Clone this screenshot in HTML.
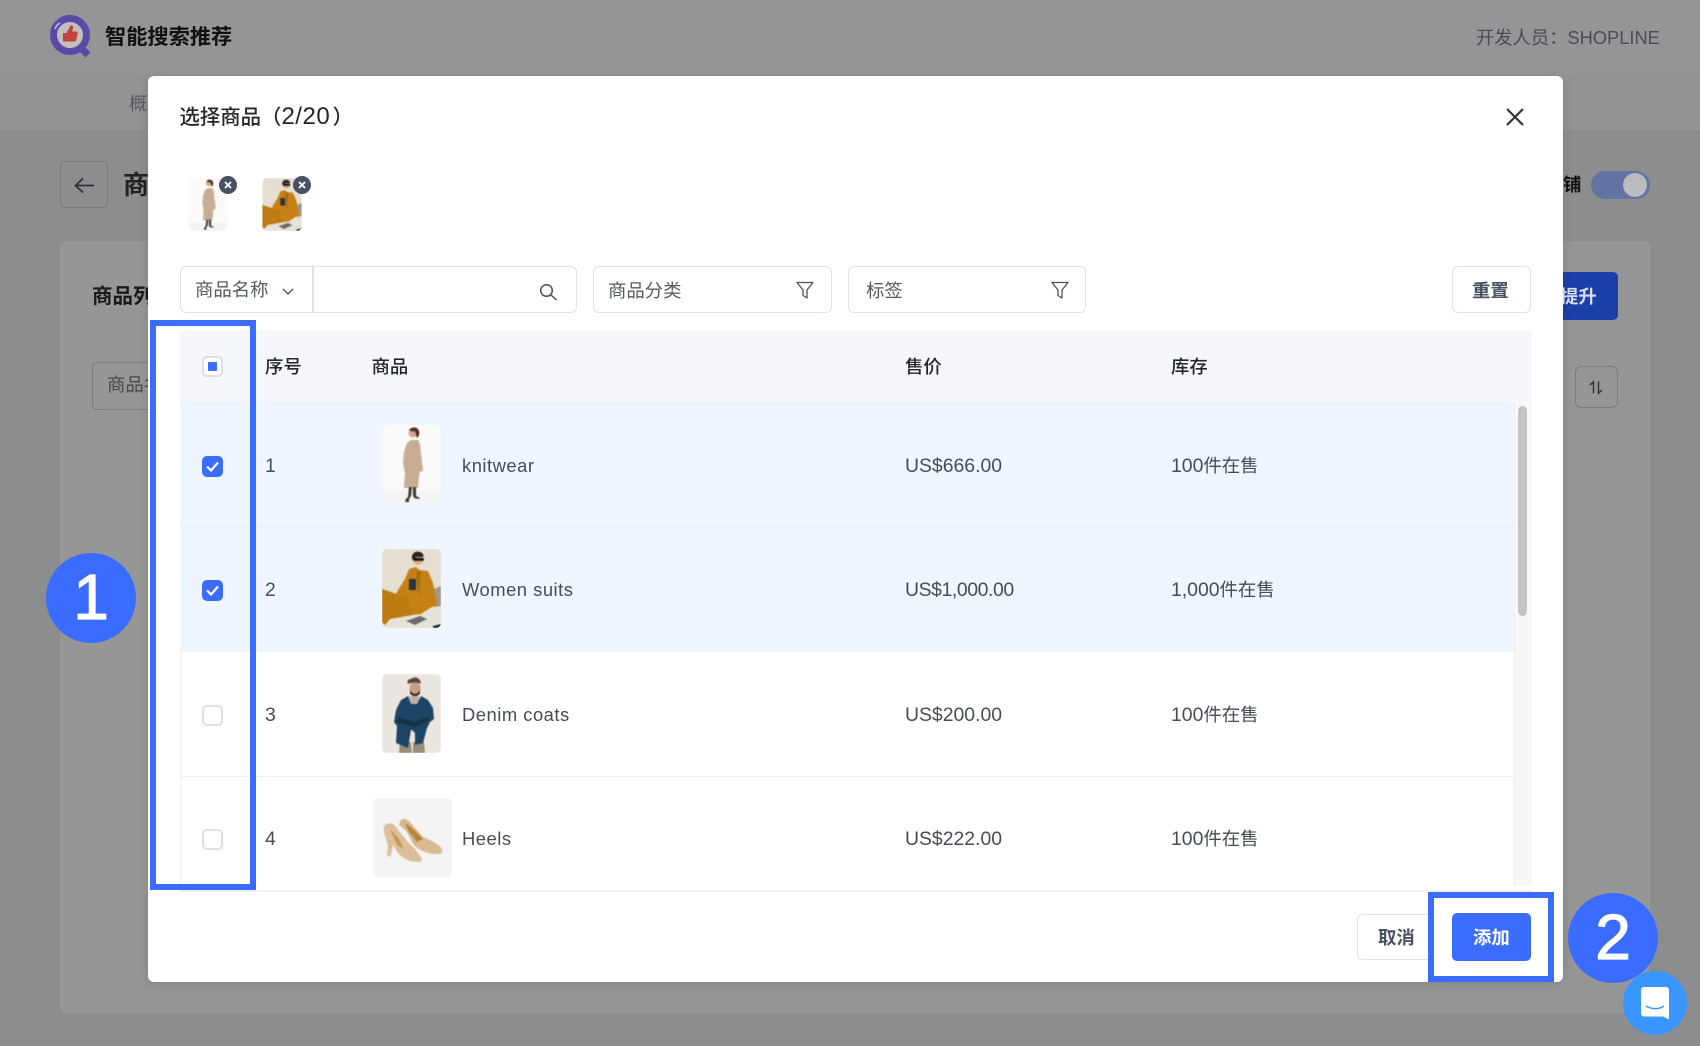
<!DOCTYPE html>
<html lang="zh-CN"><head><meta charset="utf-8"><title>智能搜索推荐</title>
<style>
*{box-sizing:border-box;margin:0;padding:0}
html,body{width:1700px;height:1046px;overflow:hidden}
body{position:relative;background:#8c8d8f;font-family:"Liberation Sans","Noto Sans CJK SC",sans-serif;color:#474c59}
.a{position:absolute}
.t{position:absolute;white-space:nowrap;line-height:24px;height:24px;font-size:18.4px}
.b{font-weight:700}
.m{font-weight:500;color:#23262d}
.box{position:absolute;border:1.5px solid #dfe2e9;border-radius:6px;background:#fff}
.cb{position:absolute;left:202px;width:21px;height:21px;border:2px solid #dcdfe9;border-radius:5px;background:#fff}
.cb.on{background:#3a6cff;border-color:#3a6cff}
.r{position:absolute;left:180px;width:1334px}
.name{font-size:18.4px;letter-spacing:.5px}
.n{font-size:19.4px}
.n i{font-style:normal;font-size:18.4px}
svg{position:absolute;overflow:visible}
.img{border-radius:5px;overflow:hidden;position:absolute}
.img svg{position:static;display:block;width:100%;height:100%;filter:blur(.45px)}
.blue{position:absolute;border:6px solid #3a6cff}
.badge{position:absolute;width:90px;height:90px;border-radius:50%;background:#3a6cff;color:#fff;text-align:center;font-size:64px;line-height:88px;-webkit-text-stroke:1.2px #fff}
</style></head><body>
<svg width="0" height="0" style="position:absolute"><defs>
<symbol id="w1" viewBox="0 0 59 79"><rect width="59" height="79" fill="#fafaf9"/><rect y="66" width="59" height="13" fill="#f4f4f3"/>
<path d="M25 18l4-3 7 0 2 4 1 10 2 15-1 3-2-1-1 5-1 12-14 0 1-15-1-5-1-5 1-11z" fill="#c6ad94"/>
<path d="M27 62h3l-1 9-2 3 0 3-4 0 1-3 2-2zM31 62h3l0 9 4 2-1 1-5-1-1-3z" fill="#3f372e"/>
<circle cx="31" cy="8" r="4.500" fill="#d2ab90"/><path d="M27 5c3-4 9-3 10 1 1 4-1 6-2 7-1-3-1-6-3-7-1 1-3 0-5-1z" fill="#4a3026"/></symbol>
<symbol id="w2" viewBox="0 0 59 79"><rect width="59" height="79" fill="#e5dfd2"/><path d="M0 68l30-10 29 0v21H0z" fill="#e6e2da"/><path d="M52 40l7-3v20l-7 1z" fill="#a39787"/>
<path d="M0 40l12 4 20 6-1 16-23 4-5 6-3-3z" fill="#bd7c12"/>
<path d="M27 20l7-2 3 3 9 1 5 12 4 22-7 3-9 6-8 1-3-10-2-8-13-1 3-6 7-11z" fill="#c58115"/>
<path d="M27 30h7v11h-7z" fill="#2d3140"/><path d="M34 27l2-7 3 3-2 26z" fill="#a96d0f"/>
<circle cx="36" cy="10" r="5.500" fill="#d6a784"/><path d="M30 10c-1-7 5-8 8-7 3 1 4 3 3 5l-7 0-2 4z" fill="#2a2523"/><rect x="32" y="9" width="10" height="2.800" rx="1.300" fill="#15120f"/>
<path d="M24 72l14-5 7 3-12 6z" fill="#6e6a6a"/><path d="M51 77l8-2v4h-8z" fill="#2a2a2a"/></symbol>
<symbol id="m1" viewBox="0 0 59 79"><rect width="59" height="79" fill="#ece6e1"/>
<path d="M18 68h11l1 11H17zM31 68h11l1 11H31z" fill="#9a8c7a"/><path d="M27 22h10v24H27z" fill="#bdb2a5"/>
<path d="M26 22l-7 4-5 10-2 12 3 4-1 17 12 5 3-18 1 0 3 3 0 12 8-2 4-15 3-6 4-3-1-11-5-8-7-4-4 8-6 0z" fill="#1d4563"/>
<path d="M15 43l17 5 14-5 2 3-15 7-18-5z" fill="#143249"/>
<ellipse cx="33" cy="15" rx="5.500" ry="7" fill="#c69d80"/><path d="M26 10c-2-5 3-5 5-6 3-2 8 1 8 6-3-2-9-2-13 0z" fill="#5c4a38"/><path d="M28 16c2 5 8 5 10 0v3c-1 4-9 4-10 0z" fill="#3d2d22"/></symbol>
<symbol id="h1" viewBox="0 0 79 79"><rect width="79" height="79" fill="#f4f4f4"/>
<path d="M11 28c3-4 9-3 11 0l12 15c2 3 5 5 8 8l6 8c2 4 0 5-3 5-8 0-15-3-20-9l-5-8-1 6-2 6-3-2 1-10c-2-6-5-13-4-19z" fill="#dcbf9a"/>
<path d="M27 23c3-4 7-2 9 0l14 16c8 3 17 8 19 12 1 4-1 6-6 5-9 0-18-4-23-10l-6-12-8-7z" fill="#d9ba93"/>
<path d="M32 25l6 4 12 12-6 3-8-10z" fill="#b9833e"/><path d="M17 31l9 10 5 10-7-4z" fill="#c79654"/></symbol>
</defs></svg>

<!-- background -->
<div class="a" style="left:0;top:0;width:1700px;height:76px;background:#949597"></div>
<div class="a" style="left:0;top:76px;width:1700px;height:54px;background:#929395"></div>
<div class="a" style="left:60px;top:241px;width:1590px;height:772px;background:#969696;border-radius:6px"></div>

<svg style="left:48px;top:14px" width="46" height="46" viewBox="0 0 46 46">
<path d="M32 33l8 8" stroke="#5a49a5" stroke-width="7"/>
<circle cx="22" cy="21" r="16.500" fill="#c3bdbb" stroke="#5a49a5" stroke-width="7"/>
<path d="M15 19h3.500l4-7.500c2-1 3 1 2.500 3l-1 3h5c1 1 1 2 .5 3l-1.500 6c-.5 1-1 1-2 1H15z" fill="#c0443c"/>
<path d="M7 15c1-3 3-5 5-6" stroke="#c9c3e6" stroke-width="1.500" fill="none"/></svg>
<div class="t b" style="left:105px;top:26px;font-size:21.200px;color:#111">智能搜索推荐</div>
<div class="t" style="left:1476px;top:26px;font-size:18.300px;color:#4a4c52">开发人员：SHOPLINE</div>
<div class="t" style="left:129px;top:92px;color:#58595c">概</div>
<div class="a" style="left:60px;top:161px;width:48px;height:47px;border:1.500px solid #76777a;border-radius:5px"></div>
<svg style="left:74px;top:177px" width="21" height="17" viewBox="0 0 21 17" fill="none" stroke="#2f3136" stroke-width="1.800"><path d="M20 8.500H2M9 1.500l-7.500 7 7.500 7"/></svg>
<div class="t b" style="left:123px;top:173px;font-size:26px;color:#222">商</div>
<div class="t b" style="left:92px;top:285px;font-size:20.500px;color:#1a1a1b">商品列</div>
<div class="a" style="left:92px;top:362px;width:70px;height:48px;border:1.500px solid #7b7c7e;border-radius:5px"></div>
<div class="t" style="left:107px;top:373px;color:#47484c">商品名</div>
<div class="t b" style="left:1563px;top:173px;color:#111">铺</div>
<div class="a" style="left:1591px;top:171px;width:59px;height:28px;border-radius:14px;background:#6373a3"></div>
<div class="a" style="left:1623px;top:173px;width:24px;height:24px;border-radius:50%;background:#bbbcbf"></div>
<div class="a" style="left:1500px;top:272px;width:118px;height:48px;border-radius:5px;background:#1d3fa8"></div>
<div class="t b" style="left:1560px;top:285px;color:#d8dde9">提升</div>
<div class="a" style="left:1575px;top:366px;width:43px;height:42px;border:1.500px solid #7b7c7e;border-radius:6px"></div>
<svg style="left:1589px;top:381px" width="14" height="13" viewBox="0 0 14 13" fill="none" stroke="#2f3136" stroke-width="1.400"><path d="M4.500 12.500V.8L1 4M9.500 .5v11.700L13 9"/></svg>

<!-- modal -->
<div class="a" style="left:148px;top:76px;width:1415px;height:906px;background:#fff;border-radius:6px;box-shadow:0 2px 10px rgba(0,0,0,.12)"></div>
<div class="t m" style="left:179.500px;top:104.500px;font-size:20.400px">选择商品（<span style="font-size:24px;letter-spacing:.5px;margin-right:2.500px">2/20</span>）</div>
<svg style="left:1506px;top:108px" width="18" height="18" viewBox="0 0 18 18" stroke="#2f3440" stroke-width="2.200"><path d="M1 1l16 16M17 1L1 17"/></svg>

<div class="img" style="left:188px;top:178px;width:40px;height:53px"><svg viewBox="0 0 59 79"><use href="#w1"/></svg></div>
<div class="img" style="left:262px;top:178px;width:40px;height:53px"><svg viewBox="0 0 59 79"><use href="#w2"/></svg></div>
<svg style="left:219px;top:176px" width="18" height="18" viewBox="0 0 18 18"><circle cx="9" cy="9" r="9" fill="#495164"/><path d="M6 6l6 6M12 6l-6 6" stroke="#fff" stroke-width="1.800"/></svg>
<svg style="left:293px;top:176px" width="18" height="18" viewBox="0 0 18 18"><circle cx="9" cy="9" r="9" fill="#495164"/><path d="M6 6l6 6M12 6l-6 6" stroke="#fff" stroke-width="1.800"/></svg>

<!-- filters -->
<div class="box" style="left:180px;top:266px;width:397px;height:47px"></div>
<div class="a" style="left:312px;top:267px;width:1.500px;height:45px;background:#dfe2e9"></div>
<div class="t" style="left:195px;top:278px;color:#565b68">商品名称</div>
<svg style="left:282px;top:288px" width="12" height="7" viewBox="0 0 12 7" fill="none" stroke="#4a5160" stroke-width="1.300"><path d="M1 1l5 5 5-5"/></svg>
<svg style="left:539px;top:283px" width="19" height="18" viewBox="0 0 19 18" fill="none" stroke="#4a5160" stroke-width="1.500"><circle cx="7.500" cy="7.500" r="5.800"/><path d="M12 12l5.500 5"/></svg>
<div class="box" style="left:593px;top:266px;width:239px;height:47px"></div>
<div class="t" style="left:608px;top:279px;color:#565b68">商品分类</div>
<svg style="left:796px;top:281px" width="18" height="18" viewBox="0 0 18 18" fill="none" stroke="#4a5160" stroke-width="1.300" stroke-linejoin="round"><path d="M1 1.500h16l-6 7.500v8l-4-2.500V9z"/></svg>
<div class="box" style="left:848px;top:266px;width:238px;height:47px"></div>
<div class="t" style="left:866px;top:279px;color:#565b68">标签</div>
<svg style="left:1051px;top:281px" width="18" height="18" viewBox="0 0 18 18" fill="none" stroke="#4a5160" stroke-width="1.300" stroke-linejoin="round"><path d="M1 1.500h16l-6 7.500v8l-4-2.500V9z"/></svg>
<div class="box" style="left:1451.500px;top:266px;width:79.500px;height:47px"></div>
<div class="t b" style="left:1472px;top:278.500px;color:#4a5160">重置</div>

<!-- table -->
<div class="a" style="left:180px;top:330px;width:1351px;height:72px;background:#f5f7fb;border-radius:6px 6px 0 0"></div>
<div class="a" style="left:180px;top:402px;width:1px;height:489px;background:#f0f1f4"></div>
<div class="a" style="left:1530px;top:330px;width:1px;height:556px;background:#f0f1f4"></div>
<div class="r" style="top:402px;height:125px;background:#eff6ff"></div>
<div class="r" style="top:527px;height:125px;background:#eff6ff;border-top:1px solid #e9eff7"></div>
<div class="r" style="top:776px;height:1px;background:#eef0f4"></div>
<div class="a" style="left:1514px;top:402px;width:16px;height:484px;background:#f8f8f8;border-left:1px solid #eeeeee"></div>
<div class="a" style="left:1518px;top:406px;width:9px;height:210px;border-radius:5px;background:#c4c4c4"></div>
<div class="a" style="left:180px;top:890px;width:1351px;height:1.500px;background:#eef0f4"></div>

<div class="cb" style="top:356px"></div><div class="a" style="left:208px;top:362px;width:9px;height:9px;border-radius:1px;background:#3a6cff"></div>
<div class="t m" style="left:265px;top:355px">序号</div>
<div class="t m" style="left:371.500px;top:355px">商品</div>
<div class="t m" style="left:905px;top:355px">售价</div>
<div class="t m" style="left:1171px;top:355px">库存</div>

<div class="cb on" style="top:456px"></div><svg style="left:206px;top:461px" width="13" height="11" viewBox="0 0 13 11" fill="none" stroke="#fff" stroke-width="2.200"><path d="M1 5.500l4 4 7-8"/></svg>
<div class="cb on" style="top:580px"></div><svg style="left:206px;top:585px" width="13" height="11" viewBox="0 0 13 11" fill="none" stroke="#fff" stroke-width="2.200"><path d="M1 5.500l4 4 7-8"/></svg>
<div class="cb" style="top:705px"></div>
<div class="cb" style="top:829px"></div>

<div class="t n" style="left:265px;top:453.500px">1</div>
<div class="t n" style="left:265px;top:577.500px">2</div>
<div class="t n" style="left:265px;top:702.500px">3</div>
<div class="t n" style="left:265px;top:826.500px">4</div>

<div class="img" style="left:382px;top:425px;width:59px;height:79px"><svg viewBox="0 0 59 79"><use href="#w1"/></svg></div>
<div class="img" style="left:382px;top:549px;width:59px;height:79px"><svg viewBox="0 0 59 79"><use href="#w2"/></svg></div>
<div class="img" style="left:382px;top:674px;width:59px;height:79px"><svg viewBox="0 0 59 79"><use href="#m1"/></svg></div>
<div class="img" style="left:373px;top:798px;width:79px;height:79px"><svg viewBox="0 0 79 79"><use href="#h1"/></svg></div>

<div class="t name" style="left:462px;top:453.500px">knitwear</div>
<div class="t name" style="left:462px;top:577.500px">Women suits</div>
<div class="t name" style="left:462px;top:702.500px">Denim coats</div>
<div class="t name" style="left:462px;top:826.500px">Heels</div>

<div class="t n" style="left:905px;top:453.500px">US$666.00</div>
<div class="t n" style="left:905px;top:577.500px;letter-spacing:-.4px">US$1,000.00</div>
<div class="t n" style="left:905px;top:702.500px">US$200.00</div>
<div class="t n" style="left:905px;top:826.500px">US$222.00</div>

<div class="t n" style="left:1171px;top:453.500px">100<i>件在售</i></div>
<div class="t n" style="left:1171px;top:577.500px">1,000<i>件在售</i></div>
<div class="t n" style="left:1171px;top:702.500px">100<i>件在售</i></div>
<div class="t n" style="left:1171px;top:826.500px">100<i>件在售</i></div>

<!-- footer -->
<div class="box" style="left:1357px;top:914px;width:79px;height:46px"></div>
<div class="t b" style="left:1378px;top:926px;color:#4a5160">取消</div>

<!-- highlights -->
<div class="blue" style="left:150px;top:320px;width:106px;height:570px"></div>
<div class="blue" style="left:1428px;top:892px;width:126px;height:90px;background:#fff"></div>
<div class="a" style="left:1452px;top:913px;width:79px;height:48px;border-radius:5px;background:#3a6cff"></div>
<div class="t b" style="left:1473px;top:926px;color:#fff">添加</div>

<div class="badge" style="left:46px;top:553px">1</div>
<div class="badge" style="left:1568px;top:893px">2</div>

<div class="a" style="left:1623px;top:971px;width:64px;height:64px;border-radius:50%;background:#3a96ff"></div>
<svg style="left:1641px;top:987px" width="28" height="33" viewBox="0 0 28 33"><path d="M3 0h22a3 3 0 0 1 3 3v29.500l-6-3H3a3 3 0 0 1-3-3V3a3 3 0 0 1 3-3z" fill="#fff"/><path d="M5 19c5 3.500 13 3.500 18 0" fill="none" stroke="#3a96ff" stroke-width="1.500"/></svg>
</body></html>
